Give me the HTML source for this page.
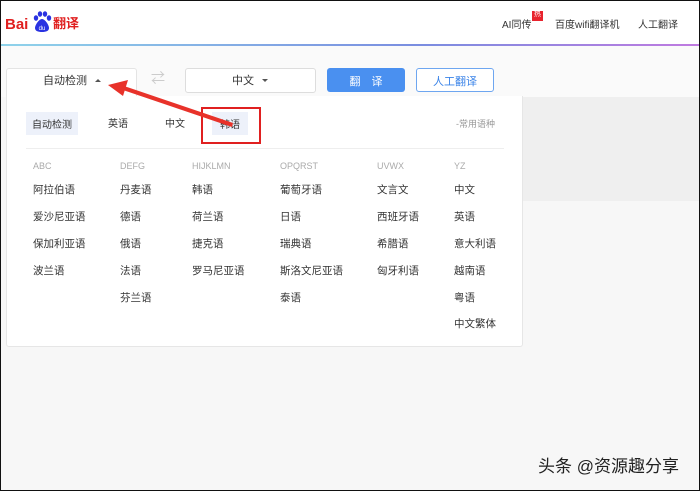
<!DOCTYPE html><html><head><meta charset="utf-8"><style>
*{margin:0;padding:0;box-sizing:border-box}
body{width:700px;height:491px;overflow:hidden;background:#f7f7f7;font-family:"Liberation Sans","Noto Sans CJK SC",sans-serif;position:relative;font-size:10.5px;color:#333;line-height:1.2}
.a{position:absolute;white-space:nowrap}
.c{display:flex;align-items:center;justify-content:center;padding-top:5px}
.frame{position:absolute;left:0;top:0;width:700px;height:491px;border:1px solid #111;pointer-events:none}
.tri{position:absolute;width:0;height:0;border-left:3px solid transparent;border-right:3px solid transparent}
.i{position:absolute;white-space:nowrap;margin-top:1px}
</style></head><body>
<div class="a" style="left:0;top:0;width:700px;height:44px;background:#fff"></div>
<div class="a" style="left:0;top:44px;width:700px;height:2px;background:linear-gradient(90deg,#8fd3ea,#7a8de0 60%,#c07ae0)"></div>
<div class="a" style="left:0;top:46px;width:700px;height:51px;background:#fafafa"></div>
<div class="a" style="left:5px;top:16px;font-weight:bold;font-size:15px;color:#e02020">Bai</div>
<div class="a" style="left:32px;top:10px;width:20px;height:24px">
<svg width="20" height="24" viewBox="0 0 20 24"><g fill="#2932e1"><ellipse cx="4" cy="8" rx="2.2" ry="2.8"/><ellipse cx="8" cy="4" rx="2.2" ry="2.8"/><ellipse cx="13" cy="4" rx="2.2" ry="2.8"/><ellipse cx="17" cy="8" rx="2.2" ry="2.8"/><path d="M10 9c-3 0-7 6-7 9 0 3 3 4 7 4s7-1 7-4c0-3-4-9-7-9z"/></g><text x="10" y="20" font-size="6" fill="#fff" text-anchor="middle">du</text></svg></div>
<div class="a" style="left:53px;top:16px;font-weight:bold;font-size:13px;color:#e02020">翻译</div>
<div class="a" style="left:502px;top:20px;font-size:10px;color:#333">AI同传</div>
<div class="a" style="left:532px;top:11px;width:11px;height:10px;background:#e8232d;color:#fff;font-size:7px;text-align:center">热</div>
<div class="a" style="left:555px;top:20px;font-size:10px">百度wifi翻译机</div>
<div class="a" style="left:638px;top:20px;font-size:10px">人工翻译</div>
<div class="a" style="left:6px;top:68px;width:131px;height:29px;background:#fff;border:1px solid #e4e4e4;border-bottom:none;border-radius:3px 3px 0 0"></div>
<div class="a" style="left:43px;top:75px;font-size:11px">自动检测</div>
<div class="tri" style="left:95px;top:79px;border-bottom:3px solid #555"></div>
<div class="a" style="left:151px;top:70px;font-size:14px;color:#ccc">⇄</div>
<div class="a" style="left:185px;top:68px;width:131px;height:25px;background:#fff;border:1px solid #ddd;border-radius:3px"></div>
<div class="a" style="left:232px;top:75px;font-size:11px">中文</div>
<div class="tri" style="left:262px;top:79px;border-top:3px solid #555"></div>
<div class="a c" style="left:327px;top:68px;width:78px;height:24px;background:#4a90f0;border-radius:3px;color:#fff;font-size:11px">翻　译</div>
<div class="a c" style="left:416px;top:68px;width:78px;height:24px;background:#fff;border:1px solid #6ea6f0;border-radius:3px;color:#3b84e8;font-size:11px">人工翻译</div>
<div class="a" style="left:522px;top:97px;width:178px;height:104px;background:#efefef"></div>
<div class="a" style="left:6px;top:96px;width:517px;height:251px;background:#fff;border:1px solid #e6e6e6;border-top:none;border-radius:0 0 3px 3px"></div>
<div class="a c" style="left:26px;top:112px;width:52px;height:23px;background:#edf1fa;font-size:10px">自动检测</div>
<div class="a" style="left:108px;top:119px;font-size:10px">英语</div>
<div class="a" style="left:165px;top:119px;font-size:10px">中文</div>
<div class="a c" style="left:212px;top:112px;width:36px;height:23px;background:#edf1fa;font-size:10px">韩语</div>
<div class="a" style="left:201px;top:107px;width:60px;height:37px;border:2px solid #e02020"></div>
<div class="a" style="left:456px;top:119px;font-size:9px;color:#999">-常用语种</div>
<div class="a" style="left:26px;top:148px;width:478px;height:1px;background:#eee"></div>
<svg class="a" style="left:0;top:0" width="300" height="160"><polygon points="233,123 124,86 123,90 232,127" fill="#e8322a"/><polygon points="108,85 128,80 123,96" fill="#e8322a"/></svg>
<div class="a" style="left:33px;top:161px;font-size:9px;color:#aaa">ABC</div>
<div class="a" style="left:120px;top:161px;font-size:9px;color:#aaa">DEFG</div>
<div class="a" style="left:192px;top:161px;font-size:9px;color:#aaa">HIJKLMN</div>
<div class="a" style="left:280px;top:161px;font-size:9px;color:#aaa">OPQRST</div>
<div class="a" style="left:377px;top:161px;font-size:9px;color:#aaa">UVWX</div>
<div class="a" style="left:454px;top:161px;font-size:9px;color:#aaa">YZ</div>
<div class="i" style="left:33px;top:183px">阿拉伯语</div><div class="i" style="left:33px;top:210px">爱沙尼亚语</div><div class="i" style="left:33px;top:237px">保加利亚语</div><div class="i" style="left:33px;top:264px">波兰语</div>
<div class="i" style="left:120px;top:183px">丹麦语</div><div class="i" style="left:120px;top:210px">德语</div><div class="i" style="left:120px;top:237px">俄语</div><div class="i" style="left:120px;top:264px">法语</div><div class="i" style="left:120px;top:291px">芬兰语</div>
<div class="i" style="left:192px;top:183px">韩语</div><div class="i" style="left:192px;top:210px">荷兰语</div><div class="i" style="left:192px;top:237px">捷克语</div><div class="i" style="left:192px;top:264px">罗马尼亚语</div>
<div class="i" style="left:280px;top:183px">葡萄牙语</div><div class="i" style="left:280px;top:210px">日语</div><div class="i" style="left:280px;top:237px">瑞典语</div><div class="i" style="left:280px;top:264px">斯洛文尼亚语</div><div class="i" style="left:280px;top:291px">泰语</div>
<div class="i" style="left:377px;top:183px">文言文</div><div class="i" style="left:377px;top:210px">西班牙语</div><div class="i" style="left:377px;top:237px">希腊语</div><div class="i" style="left:377px;top:264px">匈牙利语</div>
<div class="i" style="left:454px;top:183px">中文</div><div class="i" style="left:454px;top:210px">英语</div><div class="i" style="left:454px;top:237px">意大利语</div><div class="i" style="left:454px;top:264px">越南语</div><div class="i" style="left:454px;top:291px">粤语</div><div class="i" style="left:454px;top:317px">中文繁体</div>
<div class="a" style="left:538px;top:457px;font-size:17px;color:#222">头条 @资源趣分享</div>
<div class="frame"></div>
</body></html>
